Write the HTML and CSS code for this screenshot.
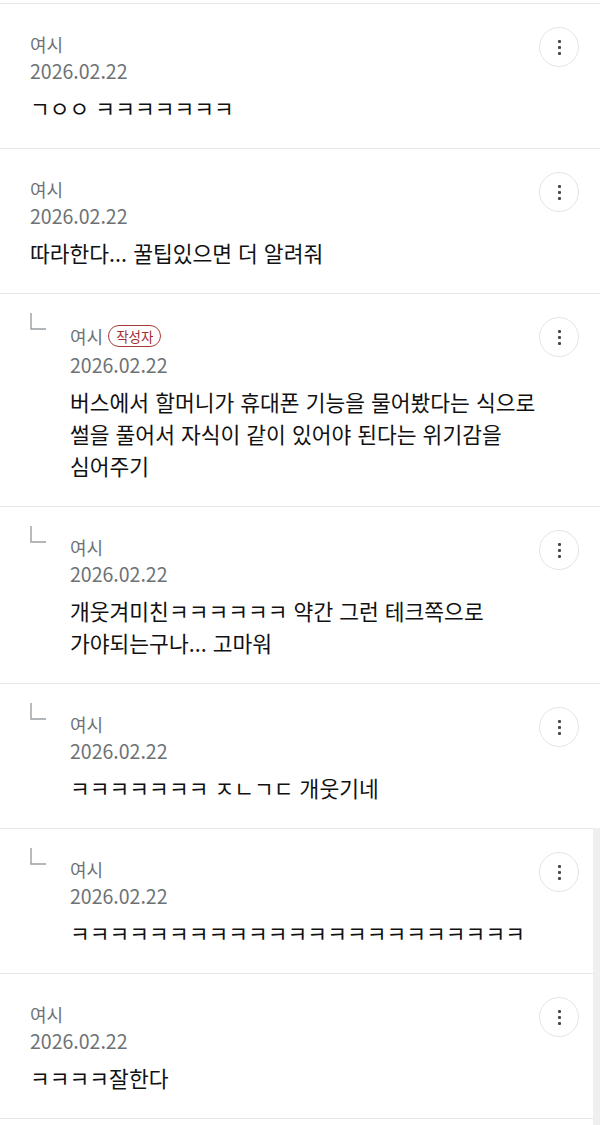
FILE: index.html
```html
<!DOCTYPE html>
<html lang="ko">
<head>
<meta charset="utf-8">
<title>댓글</title>
<link rel="stylesheet" href="styles.css">
</head>
<body>
<div class="list">

  <div class="item">
    <div class="body">
      <div class="head">
        <div class="meta">
          <div class="name-row"><span class="name">여시</span></div>
          <div class="date">2026.02.22</div>
        </div>
        <button class="kebab" aria-label="더보기"><span class="dot"></span><span class="dot"></span><span class="dot"></span></button>
      </div>
      <p class="text">ㄱㅇㅇ ㅋㅋㅋㅋㅋㅋㅋ</p>
    </div>
  </div>

  <div class="item">
    <div class="body">
      <div class="head">
        <div class="meta">
          <div class="name-row"><span class="name">여시</span></div>
          <div class="date">2026.02.22</div>
        </div>
        <button class="kebab" aria-label="더보기"><span class="dot"></span><span class="dot"></span><span class="dot"></span></button>
      </div>
      <p class="text">따라한다... 꿀팁있으면 더 알려줘</p>
    </div>
  </div>

  <div class="item reply">
    <div class="reply-mark"><svg width="17" height="17" viewBox="0 0 17 17"><path d="M1 0 V16 H16" fill="none" stroke="#9a9ea3" stroke-width="1.4"/></svg></div>
    <div class="body">
      <div class="head">
        <div class="meta">
          <div class="name-row has-badge"><span class="name">여시</span><span class="badge">작성자</span></div>
          <div class="date">2026.02.22</div>
        </div>
        <button class="kebab" aria-label="더보기"><span class="dot"></span><span class="dot"></span><span class="dot"></span></button>
      </div>
      <p class="text">버스에서 할머니가 휴대폰 기능을 물어봤다는 식으로<br>썰을 풀어서 자식이 같이 있어야 된다는 위기감을<br>심어주기</p>
    </div>
  </div>

  <div class="item reply">
    <div class="reply-mark"><svg width="17" height="17" viewBox="0 0 17 17"><path d="M1 0 V16 H16" fill="none" stroke="#9a9ea3" stroke-width="1.4"/></svg></div>
    <div class="body">
      <div class="head">
        <div class="meta">
          <div class="name-row"><span class="name">여시</span></div>
          <div class="date">2026.02.22</div>
        </div>
        <button class="kebab" aria-label="더보기"><span class="dot"></span><span class="dot"></span><span class="dot"></span></button>
      </div>
      <p class="text">개웃겨미친ㅋㅋㅋㅋㅋㅋ 약간 그런 테크쪽으로<br>가야되는구나... 고마워</p>
    </div>
  </div>

  <div class="item reply">
    <div class="reply-mark"><svg width="17" height="17" viewBox="0 0 17 17"><path d="M1 0 V16 H16" fill="none" stroke="#9a9ea3" stroke-width="1.4"/></svg></div>
    <div class="body">
      <div class="head">
        <div class="meta">
          <div class="name-row"><span class="name">여시</span></div>
          <div class="date">2026.02.22</div>
        </div>
        <button class="kebab" aria-label="더보기"><span class="dot"></span><span class="dot"></span><span class="dot"></span></button>
      </div>
      <p class="text">ㅋㅋㅋㅋㅋㅋㅋ ㅈㄴㄱㄷ 개웃기네</p>
    </div>
  </div>

  <div class="item reply">
    <div class="reply-mark"><svg width="17" height="17" viewBox="0 0 17 17"><path d="M1 0 V16 H16" fill="none" stroke="#9a9ea3" stroke-width="1.4"/></svg></div>
    <div class="body">
      <div class="head">
        <div class="meta">
          <div class="name-row"><span class="name">여시</span></div>
          <div class="date">2026.02.22</div>
        </div>
        <button class="kebab" aria-label="더보기"><span class="dot"></span><span class="dot"></span><span class="dot"></span></button>
      </div>
      <p class="text">ㅋㅋㅋㅋㅋㅋㅋㅋㅋㅋㅋㅋㅋㅋㅋㅋㅋㅋㅋㅋㅋㅋㅋ</p>
    </div>
  </div>

  <div class="item">
    <div class="body">
      <div class="head">
        <div class="meta">
          <div class="name-row"><span class="name">여시</span></div>
          <div class="date">2026.02.22</div>
        </div>
        <button class="kebab" aria-label="더보기"><span class="dot"></span><span class="dot"></span><span class="dot"></span></button>
      </div>
      <p class="text">ㅋㅋㅋㅋ잘한다</p>
    </div>
  </div>

</div>
<div class="scroll-track"></div>
</body>
</html>
```

FILE: styles.css
```css
* { box-sizing: border-box; }

html, body {
  margin: 0;
  padding: 0;
  background: #ffffff;
}

body {
  font-family: "Noto Sans CJK KR", "Noto Sans", sans-serif;
  color: #111111;
}

.list {
  padding-top: 3px;
}

.item {
  display: flex;
  border-top: 1px solid #e6e8ea;
  padding: 28px 21px 24px 30px;
}

.item:last-child {
  border-bottom: 1px solid #e6e8ea;
}

.reply-mark {
  flex: none;
  width: 40px;
  margin-top: -9px;
}

.reply-mark svg {
  display: block;
}

.body {
  flex: 1;
  min-width: 0;
}

.head {
  display: flex;
  justify-content: space-between;
  align-items: flex-start;
}

.meta {
  display: flex;
  flex-direction: column;
  gap: 2px;
}

.name-row {
  display: flex;
  align-items: center;
  height: 24px;
}

.name-row.has-badge {
  height: 28px;
}

.name {
  font-size: 18px;
  line-height: 24px;
  color: #6d7277;
}

.badge {
  margin-left: 5px;
  height: 22px;
  padding: 0 7px;
  border: 1px solid #a83a3a;
  border-radius: 11px;
  color: #a32c2c;
  font-size: 13.5px;
  line-height: 20px;
}

.date {
  font-size: 19.5px;
  line-height: 26px;
  color: #6d7277;
}

.kebab {
  flex: none;
  width: 40px;
  height: 40px;
  margin-top: -5px;
  padding: 0;
  border: 1px solid #e4e4e4;
  border-radius: 50%;
  background: #ffffff;
  display: flex;
  flex-direction: column;
  align-items: center;
  justify-content: center;
  gap: 3px;
}

.dot {
  width: 3px;
  height: 3px;
  background: #45484c;
  border-radius: 1px;
}

.text {
  margin: 8px 0 0;
  font-size: 21.5px;
  line-height: 32px;
  color: #111111;
  white-space: nowrap;
}

.scroll-track {
  position: fixed;
  right: 0;
  top: 828px;
  bottom: 0;
  width: 7px;
  background: #efeff0;
}
```
